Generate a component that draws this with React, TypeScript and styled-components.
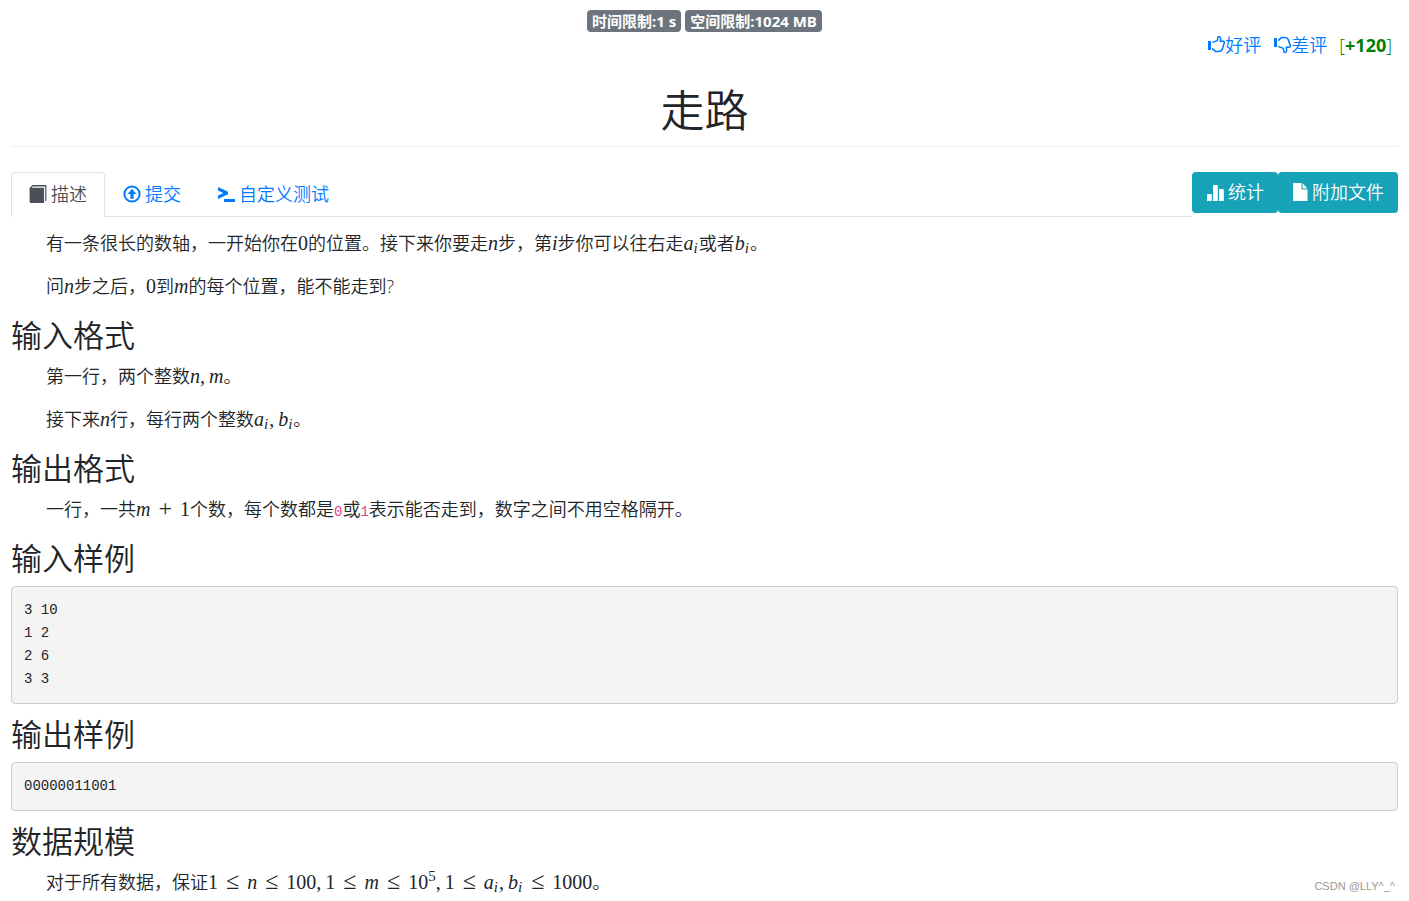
import React from "react";
import styled, { createGlobalStyle } from "styled-components";

const GlobalStyle = createGlobalStyle`
  *, *::before, *::after { box-sizing: border-box; }
  body {
    margin: 0;
    background: #fff;
    color: #212529;
    font-family: "Open Sans", "Noto Sans CJK SC", sans-serif;
    font-size: 18px;
    font-weight: 350;
    line-height: 26px;
  }
`;

const Page = styled.main`
  position: relative;
  min-height: 100vh;
  padding: 10px 11px 0;
`;

const Limits = styled.div`
  display: flex;
  justify-content: center;
  gap: 4px;
`;

const Badge = styled.span`
  padding: 0 5px;
  border-radius: 4px;
  background: #6c757d;
  color: #fff;
  font-size: 15px;
  font-weight: 700;
  line-height: 22px;
`;

const Votes = styled.div`
  display: flex;
  justify-content: flex-end;
  gap: 12px;
  padding-right: 6px;
`;

const VoteLink = styled.a`
  display: inline-flex;
  align-items: center;
  color: #007bff;
  text-decoration: none;
`;

const Score = styled.span`
  color: #008000;

  strong {
    font-weight: 700;
  }
`;

const Title = styled.h1`
  margin: 25px 0 0;
  padding-bottom: 9px;
  border-bottom: 1px solid #eee;
  font-size: 44px;
  font-weight: 350;
  line-height: 54px;
  text-align: center;
`;

const Toolbar = styled.div`
  display: flex;
  align-items: flex-start;
  margin: 25px 0 13px;
`;

const Tabs = styled.nav`
  display: flex;
  flex: 1;
  border-bottom: 1px solid #dee2e6;
`;

const Tab = styled.a<{ $active?: boolean }>`
  display: flex;
  align-items: center;
  gap: 4px;
  margin-bottom: -1px;
  padding: 8px 17px 9px;
  border: 1px solid;
  border-color: ${(p) => (p.$active ? "#dee2e6 #dee2e6 #fff" : "transparent")};
  border-radius: 4px 4px 0 0;
  background: ${(p) => (p.$active ? "#fff" : "transparent")};
  color: ${(p) => (p.$active ? "#495057" : "#007bff")};
  text-decoration: none;
`;

const Button = styled.button<{ $gap: number }>`
  display: flex;
  align-items: center;
  gap: ${(p) => p.$gap}px;
  height: 41px;
  padding: 0 14px 2px;
  border: 0;
  border-radius: 4px;
  background: #17a2b8;
  color: #fff;
  font: inherit;
  cursor: pointer;
`;

const Icon = styled.svg`
  display: block;
  flex: none;
  width: 18px;
  height: 18px;
  fill: currentColor;
`;

const Heading = styled.h2`
  margin: 0 0 9px;
  font-size: 31px;
  font-weight: 350;
  line-height: 38px;
`;

const Text = styled.p`
  margin: 0 0 17px;
  text-indent: 35px;

  &:last-child {
    margin-bottom: 0;
  }
`;

const Sample = styled.pre`
  margin: 0 0 11px;
  padding: 12px;
  border: 1px solid #ccc;
  border-radius: 4px;
  background: #f4f4f4;
  font-family: "Liberation Mono", monospace;
  font-size: 14px;
  font-weight: 400;
  line-height: 23px;
`;

const Code = styled.code`
  color: #e83e8c;
  font-family: "Liberation Mono", monospace;
  font-size: 14px;
  font-weight: 400;
  line-height: 1;
`;

const Formula = styled.span`
  font-family: "Liberation Serif", serif;
  font-size: 20px;
  font-weight: 400;
  line-height: 1;
  white-space: nowrap;

  sub, sup {
    font-size: 15px;
    line-height: 0;
  }
  sub {
    padding-right: 1px;
    vertical-align: -3px;
  }
  sup {
    vertical-align: 8px;
  }
`;

const Op = styled.span`
  padding: 0 8px;
  font-size: 24px;
  line-height: 0;
`;

const Comma = styled.span`
  padding-right: 4px;
`;

const Watermark = styled.small`
  position: absolute;
  right: 14px;
  bottom: 7px;
  color: #999;
  font-family: "Liberation Sans", sans-serif;
  font-size: 11px;
  font-weight: 400;
  line-height: 16px;
`;

const ThumbUp = () => (
  <Icon viewBox="0 0 18 18" aria-hidden="true">
    <path d="M1 5h3v9H1z" />
    <path
      d="M5.2 6.4 10.2 4.6 11.2.6Q13.8.2 13.6 2.8L13.3 5.2H16.6Q18 6.4 16.8 8.4L15.2 13.6Q14.2 15.4 11 15.4H8.4L5.2 12.4"
      fill="none"
      stroke="currentColor"
      strokeWidth="1.5"
    />
  </Icon>
);

const ThumbDown = () => (
  <Icon viewBox="0 0 18 18" aria-hidden="true">
    <path d="M1 2h3v9H1z" />
    <path
      d="M5.2 4.6 8.4 1.6H11Q14.2 1.6 15.2 3.4L16.8 8.2Q18 10.4 16.6 11.2H13.3L13.6 14Q13.8 16.8 11.2 16.4L10.2 12.4 5.2 10.4"
      fill="none"
      stroke="currentColor"
      strokeWidth="1.5"
    />
  </Icon>
);

const BookIcon = () => (
  <Icon viewBox="0 0 18 18" aria-hidden="true">
    <path d="M3.6 0H17.4v15.4l-1.2 1.4V1.6H3.8L2.6 2.8H15V18H2Q.6 18 .6 16.6V3z" />
  </Icon>
);

const UploadIcon = () => (
  <Icon viewBox="0 0 18 18" aria-hidden="true">
    <circle cx="9" cy="9" r="7.6" fill="none" stroke="currentColor" strokeWidth="2" />
    <path d="M9 3.8 13.4 9h-2.8v4.8H7.4V9H4.6z" />
  </Icon>
);

const ConsoleIcon = () => (
  <Icon viewBox="0 0 18 18" aria-hidden="true">
    <path d="M1 2 11 6.8v2.4L1 14v-3.4L6.4 8 1 5.4z" />
    <path d="M7 14h11v3H7z" />
  </Icon>
);

const StatsIcon = () => (
  <Icon viewBox="0 0 18 18" aria-hidden="true">
    <path d="M1 12Q1 11 2 11H4.8Q5.8 11 5.8 12V18H1zM7 3Q7 2 8 2H10.8Q11.8 2 11.8 3V18H7zM13 7Q13 6 14 6H16.8Q17.8 6 17.8 7V18H13z" />
  </Icon>
);

const FileIcon = () => (
  <Icon viewBox="0 0 18 18" aria-hidden="true">
    <path d="M1 0h8.5v6.5H15.5V18H1zM10.6.2 15.4 5.4H10.6z" />
  </Icon>
);

const A = () => (
  <>
    <var>a</var>
    <sub>
      <var>i</var>
    </sub>
  </>
);

const B = () => (
  <>
    <var>b</var>
    <sub>
      <var>i</var>
    </sub>
  </>
);

const N = () => <var>n</var>;
const M = () => <var>m</var>;

export default function App() {
  return (
    <>
      <GlobalStyle />
      <Page>
        <Limits>
          <Badge>时间限制:1 s</Badge>
          <Badge>空间限制:1024 MB</Badge>
        </Limits>
        <Votes>
          <VoteLink href="#up">
            <ThumbUp />
            好评
          </VoteLink>
          <VoteLink href="#down">
            <ThumbDown />
            差评
          </VoteLink>
          <Score>
            [<strong>+120</strong>]
          </Score>
        </Votes>
        <Title>走路</Title>
        <Toolbar>
          <Tabs>
            <Tab href="#description" $active>
              <BookIcon />
              描述
            </Tab>
            <Tab href="#submit">
              <UploadIcon />
              提交
            </Tab>
            <Tab href="#custom-test">
              <ConsoleIcon />
              自定义测试
            </Tab>
          </Tabs>
          <Button type="button" $gap={4}>
            <StatsIcon />
            统计
          </Button>
          <Button type="button" $gap={2}>
            <FileIcon />
            附加文件
          </Button>
        </Toolbar>

        <section>
          <Text>
            有一条很长的数轴，一开始你在<Formula>0</Formula>的位置。接下来你要走
            <Formula><N /></Formula>步，第<Formula><var>i</var></Formula>步你可以往右走
            <Formula><A /></Formula>或者<Formula><B /></Formula>。
          </Text>
          <Text>
            问<Formula><N /></Formula>步之后，<Formula>0</Formula>到
            <Formula><M /></Formula>的每个位置，能不能走到?
          </Text>
          <Heading>输入格式</Heading>
          <Text>
            第一行，两个整数<Formula><N /><Comma>,</Comma><M /></Formula>。
          </Text>
          <Text>
            接下来<Formula><N /></Formula>行，每行两个整数
            <Formula><A /><Comma>,</Comma><B /></Formula>。
          </Text>
          <Heading>输出格式</Heading>
          <Text>
            一行，一共<Formula><M /><Op>+</Op>1</Formula>个数，每个数都是<Code>0</Code>或
            <Code>1</Code>表示能否走到，数字之间不用空格隔开。
          </Text>
          <Heading>输入样例</Heading>
          <Sample>{"3 10\n1 2\n2 6\n3 3"}</Sample>
          <Heading>输出样例</Heading>
          <Sample>00000011001</Sample>
          <Heading>数据规模</Heading>
          <Text>
            对于所有数据，保证
            <Formula>
              1<Op>≤</Op><N /><Op>≤</Op>100<Comma>,</Comma>1<Op>≤</Op><M /><Op>≤</Op>10
              <sup>5</sup><Comma>,</Comma>1<Op>≤</Op><A /><Comma>,</Comma><B /><Op>≤</Op>1000
            </Formula>
            。
          </Text>
        </section>
        <Watermark>CSDN @LLY^_^</Watermark>
      </Page>
    </>
  );
}
